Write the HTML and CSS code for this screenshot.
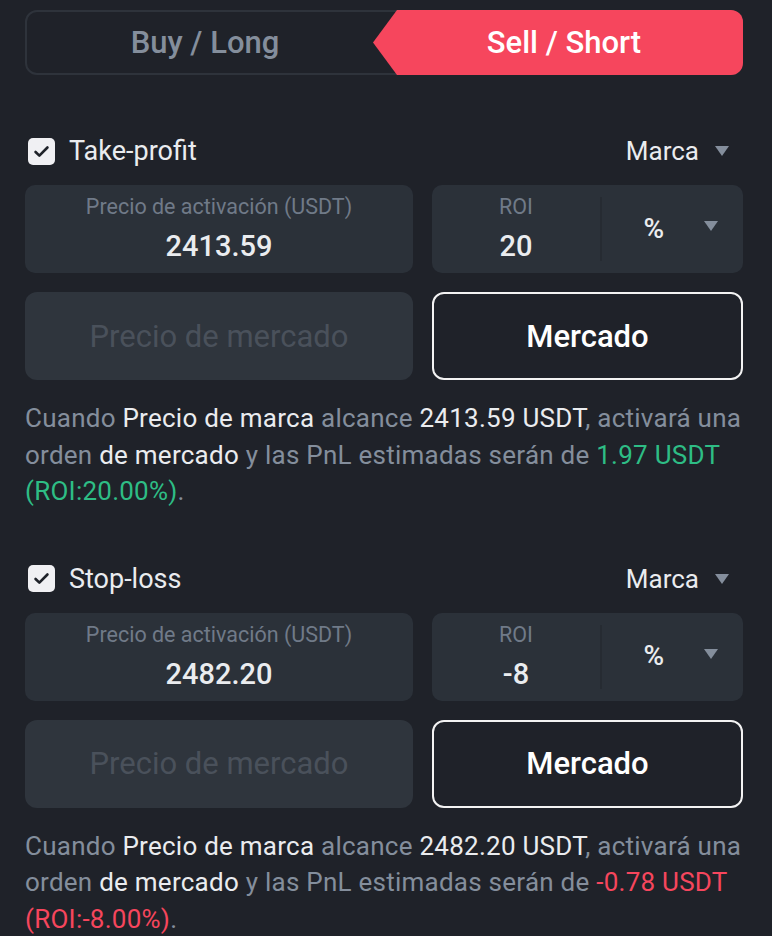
FILE: index.html
```html
<!DOCTYPE html>
<html lang="es">
<head>
  <meta charset="UTF-8" />
  <meta name="viewport" content="width=device-width, initial-scale=1.0"/>
  <title>TP/SL</title>
  <link rel="stylesheet" href="styles.css">
</head>
<body>

  <!-- Side tabs -->
  <div class="side-tabs">
    <div class="tab">Buy / Long</div>
    <div class="tab active">Sell / Short</div>
  </div>

  <!-- Take-profit -->
  <div class="section tp">
    <div class="head">
      <label class="check"><span class="box"><svg viewBox="0 0 16 16" width="16" height="16"><path d="M3 8.4l3.2 3.1L13 4.6" fill="none" stroke="#1f2229" stroke-width="2.2" stroke-linecap="round" stroke-linejoin="round"/></svg></span>Take-profit</label>
      <div class="select">Marca <span class="caret"></span></div>
    </div>
    <div class="fields">
      <div class="field price">
        <div class="label">Precio de activación (USDT)</div>
        <div class="value">2413.59</div>
      </div>
      <div class="field roi">
        <div class="roi-input">
          <div class="label">ROI</div>
          <div class="value">20</div>
        </div>
        <div class="unit">% <span class="caret"></span></div>
      </div>
    </div>
    <div class="buttons">
      <div class="btn disabled">Precio de mercado</div>
      <div class="btn outline">Mercado</div>
    </div>
    <p class="note">Cuando <b>Precio de marca</b> alcance <b>2413.59 USDT</b>, activará una orden <b>de mercado</b> y las PnL estimadas serán de <span class="up">1.97 USDT (ROI:20.00%)</span>.</p>
  </div>

  <!-- Stop-loss -->
  <div class="section sl">
    <div class="head">
      <label class="check"><span class="box"><svg viewBox="0 0 16 16" width="16" height="16"><path d="M3 8.4l3.2 3.1L13 4.6" fill="none" stroke="#1f2229" stroke-width="2.2" stroke-linecap="round" stroke-linejoin="round"/></svg></span>Stop-loss</label>
      <div class="select">Marca <span class="caret"></span></div>
    </div>
    <div class="fields">
      <div class="field price">
        <div class="label">Precio de activación (USDT)</div>
        <div class="value">2482.20</div>
      </div>
      <div class="field roi">
        <div class="roi-input">
          <div class="label">ROI</div>
          <div class="value">-8</div>
        </div>
        <div class="unit">% <span class="caret"></span></div>
      </div>
    </div>
    <div class="buttons">
      <div class="btn disabled">Precio de mercado</div>
      <div class="btn outline">Mercado</div>
    </div>
    <p class="note">Cuando <b>Precio de marca</b> alcance <b>2482.20 USDT</b>, activará una orden <b>de mercado</b> y las PnL estimadas serán de <span class="down">-0.78 USDT (ROI:-8.00%)</span>.</p>
  </div>

</body>
</html>
```

FILE: styles.css
```css
body {
  background: #1f2229;
  font-family: Roboto, 'Noto Sans', sans-serif;
  margin: 0;
  padding: 10px 29px 0 25px;
  color: #eaecef;
  overflow: hidden;
}

/* tabs */
.side-tabs {
  display: flex;
  height: 65px;
  border: 2px solid #2e333b;
  border-radius: 12px;
  box-sizing: border-box;
}

.tab {
  flex: 1;
  display: flex;
  align-items: center;
  justify-content: center;
  font-size: 31px;
  font-weight: 500;
  color: #848e9c;
  padding-left: 10px;
}

.tab.active {
  flex: 0 0 370px;
  box-sizing: border-box;
  margin: -2px -2px -2px 0;
  background: #f6465d;
  color: #fff;
  border-radius: 0 12px 12px 0;
  clip-path: polygon(24px 0, 100% 0, 100% 100%, 24px 100%, 0 50%);
  padding-left: 12px;
}

/* sections */
.section.tp { margin-top: 56px; }
.section.sl { margin-top: 49px; }

.head {
  display: flex;
  justify-content: space-between;
  align-items: center;
  height: 40px;
}

.check {
  display: flex;
  align-items: center;
  font-size: 27px;
  gap: 14px;
}

.box {
  width: 27px;
  height: 27px;
  margin-left: 3px;
  background: #f0f0f3;
  border-radius: 5px;
  display: flex;
  align-items: center;
  justify-content: center;
}

.box svg {
  width: 19px;
  height: 19px;
}

.select {
  display: flex;
  align-items: center;
  font-size: 26px;
  gap: 16px;
  margin-right: 14px;
}

.caret {
  width: 0;
  height: 0;
  border-left: 7px solid transparent;
  border-right: 7px solid transparent;
  border-top: 10px solid #848e9c;
}

.fields {
  display: flex;
  gap: 19px;
  margin-top: 14px;
}

.field {
  background: #2b3139;
  border-radius: 10px;
  height: 88px;
  box-sizing: border-box;
}

.field.price {
  flex: 0 0 388px;
  text-align: center;
  padding-top: 9px;
}

.label {
  font-size: 21.5px;
  line-height: 25px;
  color: #707a88;
}

.value {
  font-size: 29px;
  line-height: 34px;
  font-weight: 500;
  color: #eaecef;
  margin-top: 10px;
}

.field.roi {
  flex: 1;
  display: flex;
}

.roi-input {
  width: 170px;
  text-align: center;
  border-right: 2px solid #262b32;
  margin: 12px 0;
  box-sizing: border-box;
}

.roi-input .label {
  margin-top: -3px;
}

.unit {
  flex: 1;
  display: flex;
  align-items: center;
  justify-content: flex-end;
  padding: 0 25px 0 0;
  gap: 40px;
  font-size: 28px;
  font-weight: 500;
  margin-top: -2px;
}

.unit .caret {
  margin-bottom: 4px;
}

.buttons {
  display: flex;
  gap: 19px;
  margin-top: 19px;
}

.btn {
  height: 88px;
  border-radius: 12px;
  display: flex;
  align-items: center;
  justify-content: center;
  font-size: 31px;
  font-weight: 500;
  box-sizing: border-box;
}

.btn.disabled {
  flex: 0 0 388px;
  background: #2f353d;
  color: #4a515b;
  font-weight: 400;
}

.btn.outline {
  flex: 1;
  border: 2px solid #f3f3f3;
  color: #fff;
}

.note {
  margin: 20px 0 0;
  font-size: 26px;
  line-height: 36.5px;
  letter-spacing: 0.25px;
  color: #848e9c;
}

.note b {
  font-weight: 400;
  color: #eaecef;
}

.up { color: #2ebd85; }
.down { color: #f6465d; }
```
